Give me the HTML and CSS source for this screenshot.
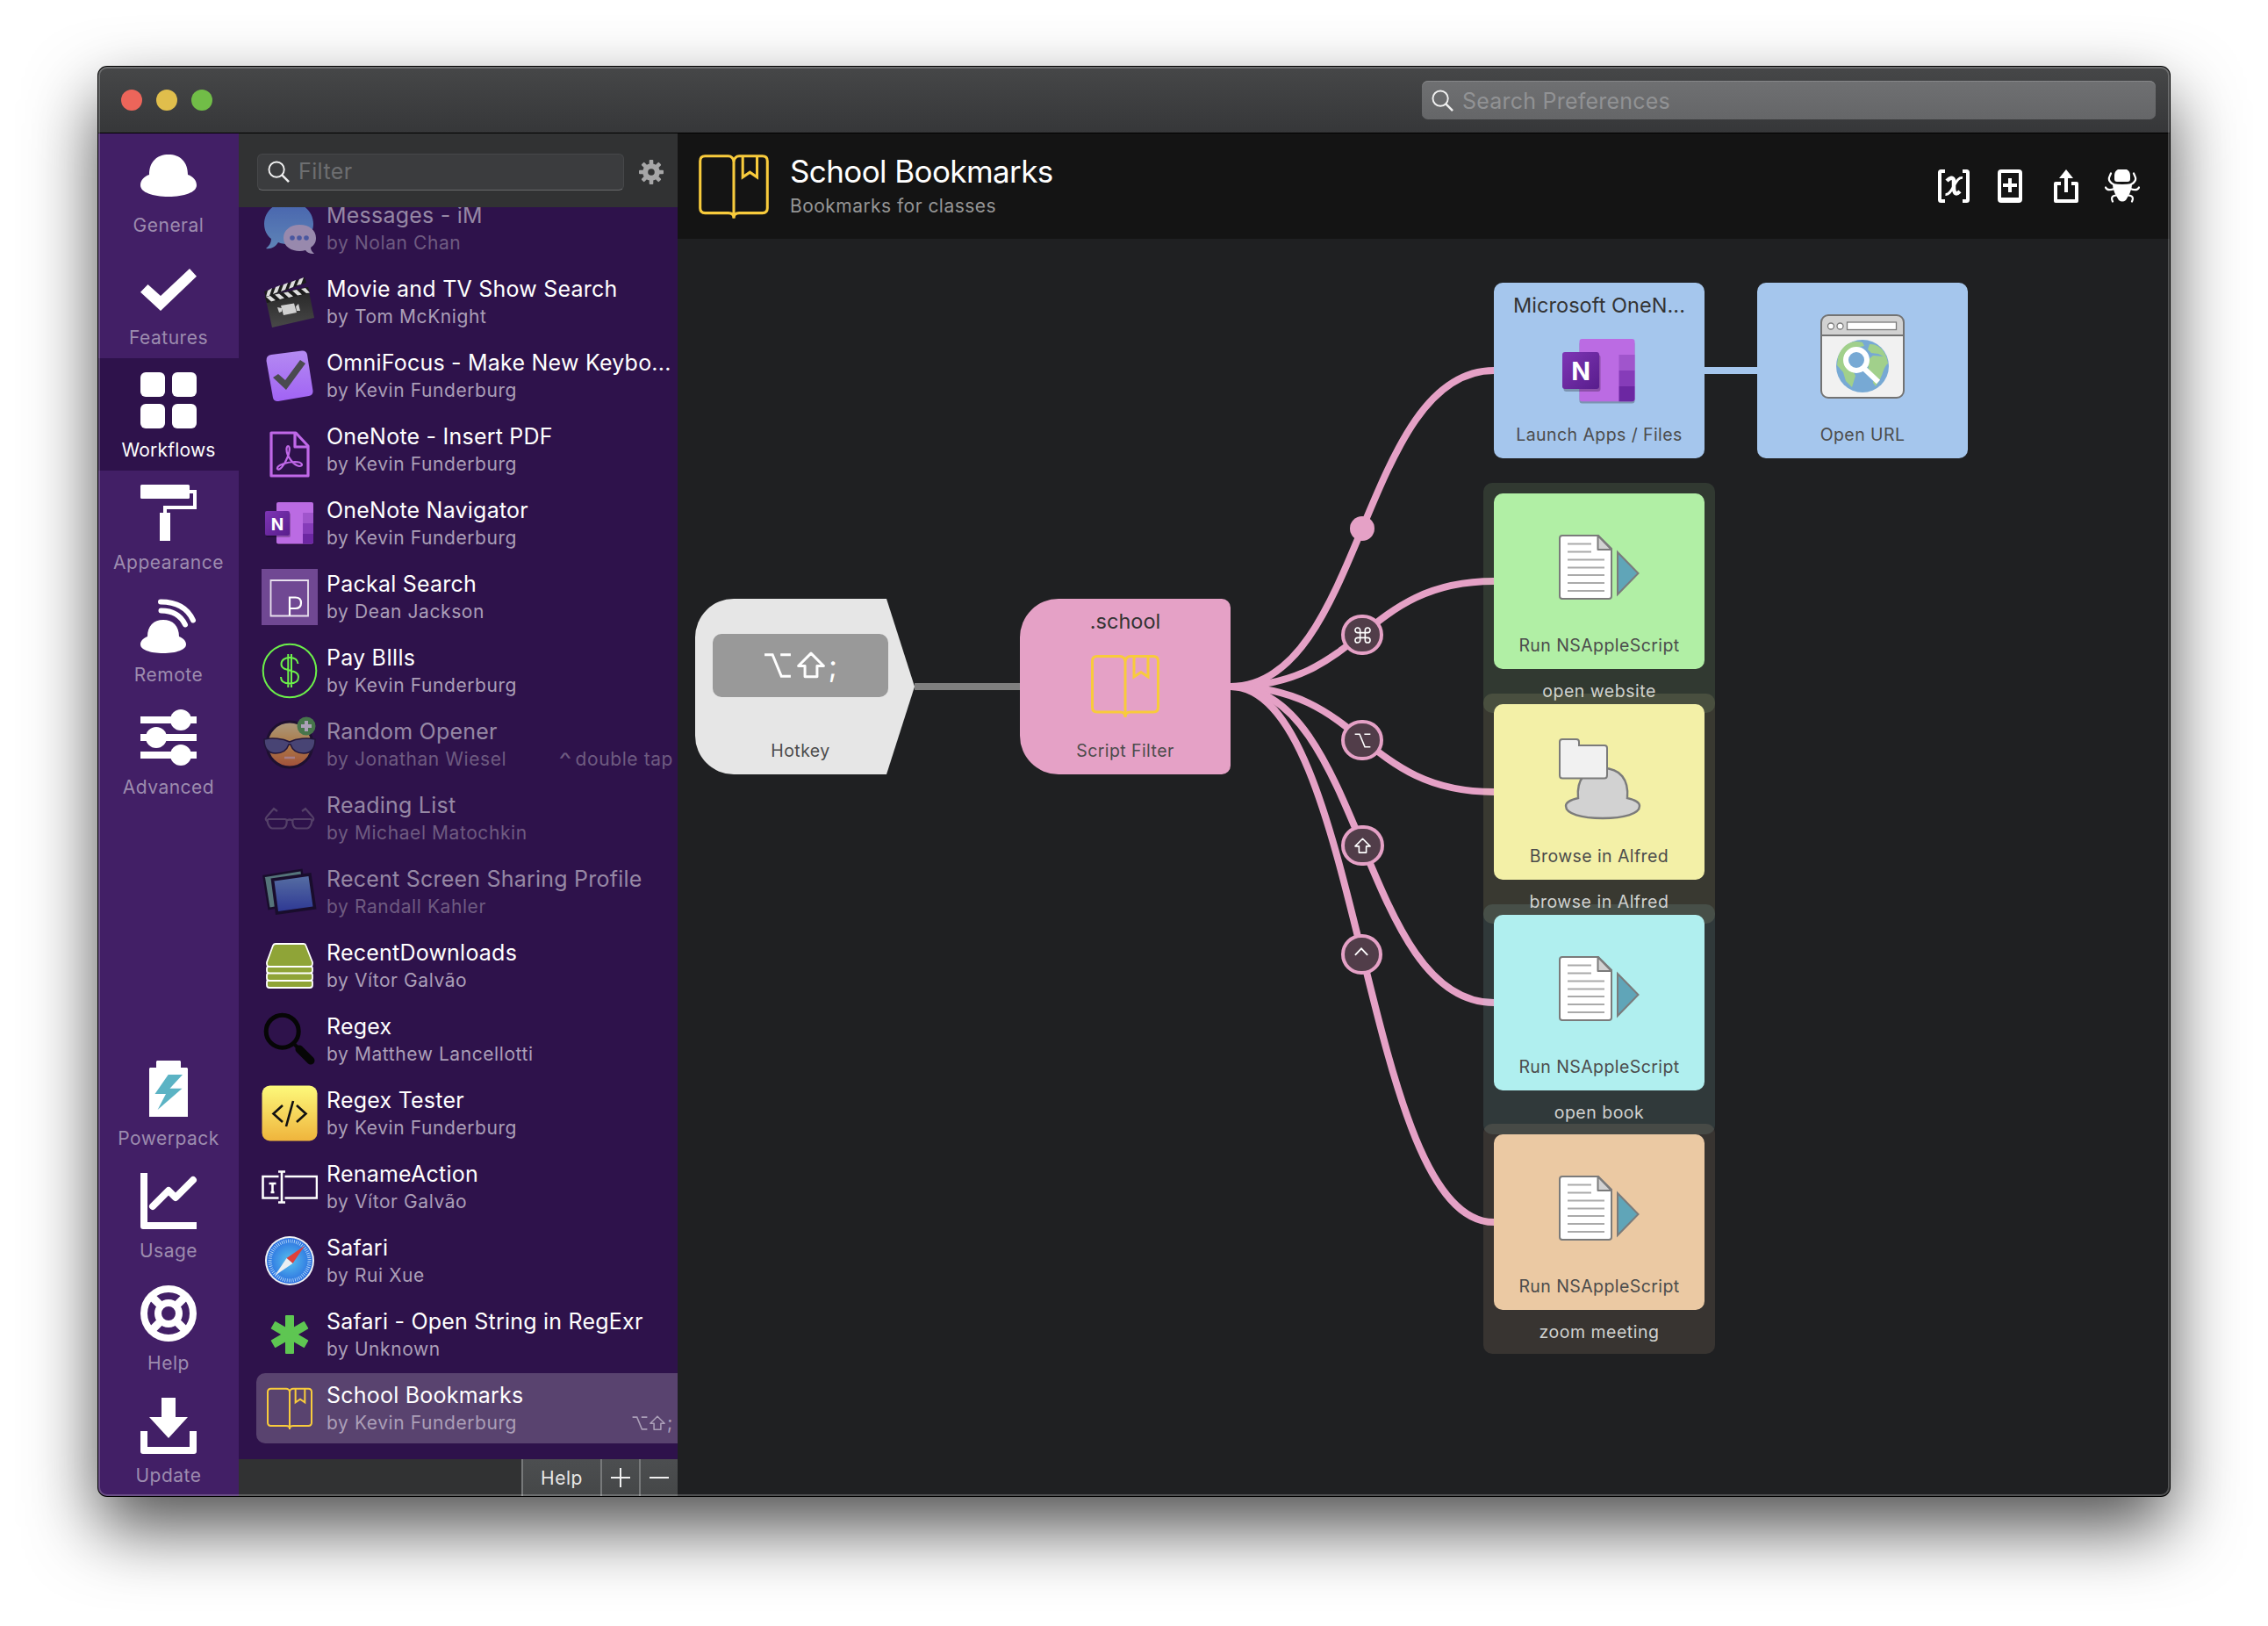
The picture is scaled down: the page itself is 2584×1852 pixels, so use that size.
FILE: index.html
```html
<!DOCTYPE html>
<html lang="en">
<head>
<meta charset="utf-8">
<title>Preferences</title>
<link rel="stylesheet" href="styles.css">
</head>
<body>
<svg class="defs" width="0" height="0" aria-hidden="true">
  <defs>
    <linearGradient id="gN" x1="0" y1="0" x2="1" y2="1"><stop offset="0" stop-color="#7e35b5"/><stop offset="1" stop-color="#581d8c"/></linearGradient>
    <linearGradient id="gOmni" x1="0" y1="0" x2="0" y2="1"><stop offset="0" stop-color="#b48af2"/><stop offset="1" stop-color="#a163f4"/></linearGradient>
    <linearGradient id="gYellow" x1="0" y1="0" x2="0" y2="1"><stop offset="0" stop-color="#fdf97b"/><stop offset="1" stop-color="#efb43c"/></linearGradient>
    <linearGradient id="gMsg" x1="0" y1="0" x2="0" y2="1"><stop offset="0" stop-color="#5a9cf0"/><stop offset="1" stop-color="#7fd0ff"/></linearGradient>
    <linearGradient id="gClap" x1="0" y1="0" x2="0" y2="1"><stop offset="0" stop-color="#242424"/><stop offset="1" stop-color="#484848"/></linearGradient>
    <linearGradient id="gFace" x1="0" y1="0" x2="0" y2="1"><stop offset="0" stop-color="#fff3a0"/><stop offset=".5" stop-color="#ffc046"/><stop offset="1" stop-color="#f07a30"/></linearGradient>
    <linearGradient id="gScreen" x1="0" y1="0" x2="0" y2="1"><stop offset="0" stop-color="#74aede"/><stop offset="1" stop-color="#2c4fc4"/></linearGradient>
    <radialGradient id="gSafari"><stop offset="0" stop-color="#57c0ee"/><stop offset="1" stop-color="#2b6fe0"/></radialGradient>
    <symbol id="book" viewBox="0 0 96 96">
      <g fill="none" stroke-width="3">
        <path d="M48 84V20.500C48 17 45 14.500 42 14.500H16Q10.500 14.500 10.500 20V72.500Q10.500 78 16 78H42C46 78 48 80 48 83"/>
        <path d="M48 20.500C48 17 51 14.500 54 14.500H80Q85.500 14.500 85.500 20V72.500Q85.500 78 80 78H54C50 78 48 80 48 83"/>
        <path d="M58 14.500V38L66 32.500L74 38V14.500"/>
      </g>
    </symbol>
    <symbol id="onenote" viewBox="0 0 64 64">
      <rect x="17" y="10" width="42" height="47" rx="2" fill="#000" opacity=".25"/>
      <rect x="17" y="8" width="42" height="47.500" rx="2" fill="#bb6be3"/>
      <path d="M47 20H59V32H47z" fill="#a055cc"/><path d="M47 32H59V44H47z" fill="#863cb9"/><path d="M47 44H59V53.500a2 2 0 0 1-2 2H47z" fill="#6c27a2"/>
      <rect x="5" y="20" width="28" height="28" rx="2" fill="#000" opacity=".25"/>
      <rect x="4" y="18" width="28" height="28" rx="2" fill="url(#gN)"/>
      <text x="18" y="39.500" text-anchor="middle" class="n-logo">N</text>
    </symbol>
    <symbol id="script" viewBox="0 0 96 96">
      <path d="M8 10H49L64 25V79a3 3 0 0 1-3 3H8a3 3 0 0 1-3-3V13a3 3 0 0 1 3-3z" fill="#fff" stroke="#7b7b7b" stroke-width="2"/>
      <path d="M48.500 10V26H64z" fill="#d2d2d2" stroke="#7b7b7b" stroke-width="2" stroke-linejoin="round"/>
      <path d="M14 19.500H41M14 28.500H41M14 37.500H56M14 46.500H56M14 55H56M14 64H56M14 73H56" stroke="#aaa" stroke-width="2"/>
      <path d="M71 29L94.500 53L71 77z" fill="#60a5b8" stroke="#7b7b7b" stroke-width="2"/>
    </symbol>
    <symbol id="lens" viewBox="0 0 26 26"><circle cx="10.500" cy="10.500" r="9" fill="none" stroke-width="2"/><path d="M17 17L25 25" stroke-width="2.600"/></symbol>
    <symbol id="opt" viewBox="0 0 30 30"><path d="M1 3.500H9.500L19 26.500H29M18 3.500H29" fill="none"/></symbol>
    <symbol id="shift" viewBox="0 0 30 30"><path d="M15 2L28.500 15.500H21.500V27H8.500V15.500H1.500z" fill="none" stroke-linejoin="round"/></symbol>
  </defs>
</svg>

<div class="window">
  <header class="titlebar">
    <div class="lights"><i class="red"></i><i class="yellow"></i><i class="green"></i></div>
    <div class="search"><svg class="lens"><use href="#lens"/></svg><span>Search Preferences</span></div>
  </header>
  <div class="content">
    <nav class="sidebar">
      <a class="tab"><svg viewBox="0 0 64 64"><path d="M10 31C10 16 19 8 32 8S54 16 54 31C60 33 64 37.500 64 43C64 51 50 56 32 56S0 51 0 43C0 37.500 4 33 10 31z"/></svg><span>General</span></a>
      <a class="tab"><svg viewBox="0 0 64 64"><path d="M0 36.700L8.500 28L23 41L56 10L64 18.700L23 58z"/></svg><span>Features</span></a>
      <a class="tab active"><svg viewBox="0 0 64 64"><rect width="28" height="28" rx="6"/><rect x="36" width="28" height="28" rx="6"/><rect y="36" width="28" height="28" rx="6"/><rect x="36" y="36" width="28" height="28" rx="6"/></svg><span>Workflows</span></a>
      <a class="tab"><svg viewBox="0 0 64 64"><rect width="56" height="16" rx="1.500"/><path d="M56 8H62V26H28V34" fill="none" stroke="#fff" stroke-width="4"/><rect x="22" y="32" width="12" height="32"/></svg><span>Appearance</span></a>
      <a class="tab"><svg viewBox="0 0 64 64"><path d="M8 45C8 33 15 26 26 26S44 33 44 45C49 47 52 50 52 54C52 60 41 64 26 64S0 60 0 54C0 50 3 47 8 45z"/><path d="M23.500 15.500C36 15.500 46 21 51 31.500M23 5.500C41 5.500 54 13 60 26.500" fill="none" stroke="#fff" stroke-width="6" stroke-linecap="round"/></svg><span>Remote</span></a>
      <a class="tab"><svg viewBox="0 0 64 64"><path d="M0 8H64V16H0zM0 28H64V36H0zM0 48H64V56H0z"/><circle cx="46" cy="12" r="12"/><circle cx="18" cy="32" r="12"/><circle cx="46" cy="52" r="12"/></svg><span>Advanced</span></a>
      <div class="spacer"></div>
      <a class="tab"><svg viewBox="0 0 64 64"><path d="M19 0H45L46 1V8H53L54 9V64H10V9L11 8H18V1z"/><path d="M31.700 16H48L33.500 31.700H47.500L19.600 56L29 38H16.500z" fill="#5bb3c4"/></svg><span>Powerpack</span></a>
      <a class="tab"><svg viewBox="0 0 64 64"><path d="M0 0H8V56H64V64H3Q0 64 0 61z"/><path d="M14 38L32 20L40 28L60 8" fill="none" stroke="#fff" stroke-width="8" stroke-linecap="round" stroke-linejoin="round"/></svg><span>Usage</span></a>
      <a class="tab"><svg viewBox="0 0 64 64"><g fill="none" stroke="#fff"><circle cx="32" cy="32" r="28" stroke-width="8"/><circle cx="32" cy="32" r="12" stroke-width="8"/><path d="M12 12L23 23M52 12L41 23M12 52L23 41M52 52L41 41" stroke-width="9"/></g></svg><span>Help</span></a>
      <a class="tab"><svg viewBox="0 0 64 64"><path d="M24 0H40V22H54L32 46L10 22H24z"/><path d="M0 38H8V56H56V38H64V61Q64 64 61 64H3Q0 64 0 61z"/></svg><span>Update</span></a>
    </nav>

    <section class="workflows">
      <div class="filterbar">
        <div class="filter"><svg class="lens"><use href="#lens"/></svg><span>Filter</span></div>
        <svg class="gear" viewBox="0 0 28 28"><g fill="#a6a6a7"><circle cx="14" cy="14" r="9.800"/><g id="teeth"><rect x="11.700" y="0" width="4.600" height="28" rx="1"/><rect x="0" y="11.700" width="28" height="4.600" rx="1"/></g><use href="#teeth" transform="rotate(45 14 14)"/></g><circle cx="14" cy="14" r="3.800" fill="#313233"/></svg>
      </div>
      <div class="list">
        <div class="row off"><svg class="ico" viewBox="0 0 64 64"><path d="M31 2C47 2 59 13 59 27S47 50 31 50C26 50 22 49.500 19 48C16 53 11 56 5 55C9 52 11 48 11 44C6 40 3 34 3 27C3 13 15 2 31 2z" fill="url(#gMsg)"/><path d="M43.500 28C54 28 62 34 62 43C62 48 60 51 56 54C56 57 58 59 60 61C56 61.500 52 60 50 57C40 60 25 56 25 43C25 34 33 28 43.500 28z" fill="#dfd9ee"/><g fill="#5d86d8"><circle cx="35" cy="43" r="2.800"/><circle cx="43" cy="43" r="2.800"/><circle cx="51" cy="43" r="2.800"/></g></svg><div class="meta"><b>Messages - iM</b><p>by Nolan Chan</p></div></div>
        <div class="row"><svg class="ico" viewBox="0 0 64 64"><path d="M4 25L53 15L60 50L12 61z" fill="url(#gClap)"/><path d="M3 20L49 4L51 10L5 27z" fill="#1c1c1c"/><path d="M7 19L12 16L9 25L5 26zM16 15L21 13L18 21L13 23zM25 12L30 10L27 18L22 20zM34 9L39 7L36 15L31 17zM43 6L48 4L45 12L40 13z" fill="#ddd"/><path d="M4 26L53 15L55 22L6 33z" fill="#1c1c1c"/><path d="M5 26L10 25L16 30L11 31.500zM15 23.500L20 22.500L26 27.500L21 29zM25 21.500L30 20.500L36 25.500L31 27zM35 19L40 18L46 23.500L41 24.500zM45 17L50 16L55 21.500L51 22z" fill="#ddd"/><path d="M22 36L37 33.500L40 44L25 47zM18 38L23 39V43L20 44zM39 37L42 34L44 42L40 42z" fill="#d0d0d0"/></svg><div class="meta"><b>Movie and TV Show Search</b><p>by Tom McKnight</p></div></div>
        <div class="row"><svg class="ico" viewBox="0 0 64 64"><path d="M11 8L46 3.500Q51 3 52 8L58.500 49Q59 54 54 55L19 61Q14 61.500 13 57L5.500 15Q5 9 11 8z" fill="url(#gOmni)"/><path d="M13 34L19 30L27 37L44 14L50 18L28 48z" fill="#4a4a50"/></svg><div class="meta"><b>OmniFocus - Make New Keybo...</b><p>by Kevin Funderburg</p></div></div>
        <div class="row"><svg class="ico" viewBox="0 0 64 64"><g fill="none" stroke="#c068e8" stroke-width="3.200" stroke-linejoin="round"><path d="M11 13H39L53 28V62H11z"/><path d="M38 13V29H53"/><path d="M30 28C33 28 32 36 29 42C26 50 20 57 18 54C17 50 29 46 38 46C47 46 48 51 43 51C37 50 28 40 28.500 31Q29 28 30 28z" stroke-width="2.200"/></g></svg><div class="meta"><b>OneNote - Insert PDF</b><p>by Kevin Funderburg</p></div></div>
        <div class="row"><svg class="ico"><use href="#onenote"/></svg><div class="meta"><b>OneNote Navigator</b><p>by Kevin Funderburg</p></div></div>
        <div class="row"><svg class="ico" viewBox="0 0 64 64"><rect width="64" height="64" fill="#704893"/><path d="M10.500 13H53V53.500H10.500z" fill="none" stroke="#e8e0ee" stroke-width="1.800"/><path d="M32 53V32.500H38.500Q45 32.500 45 38.700T38.500 45H32" fill="none" stroke="#fff" stroke-width="2.200"/></svg><div class="meta"><b>Packal Search</b><p>by Dean Jackson</p></div></div>
        <div class="row"><svg class="ico" viewBox="0 0 64 64"><g fill="none" stroke="#6cf04a" stroke-width="2"><circle cx="32" cy="32" r="30.300"/><path d="M41.500 24C41 19 37 17 32 17S22.500 19.500 22.500 24.500C22.500 34 42 29 42 39C42 44 38 46.500 32 46.500S22 44 22 39M30.300 13V51M34 13V51"/></g></svg><div class="meta"><b>Pay BIlls</b><p>by Kevin Funderburg</p></div></div>
        <div class="row off"><svg class="ico" viewBox="0 0 64 64"><circle cx="32" cy="32" r="26" fill="url(#gFace)" stroke="#15101f" stroke-width="3"/><path d="M3 26C12 24 24 25 32 29C40 25 52 24 61 26C61 36 57 42 48 42C40 42 35 38 33 32H31C29 38 24 42 16 42C7 42 3 36 3 26z" fill="#5a6690" stroke="#1a1730" stroke-width="1.500"/><path d="M26 47H38" stroke="#f7c6b0" stroke-width="2.500"/><circle cx="51" cy="11" r="10.500" fill="#58b84c"/><path d="M51 5V17M45 11H57" stroke="#fff" stroke-width="4"/></svg><div class="meta"><b>Random Opener</b><p>by Jonathan Wiesel<span><i class="caret">^</i>double tap</span></p></div></div>
        <div class="row off"><svg class="ico" viewBox="0 0 64 64"><g fill="none" stroke="#6e5f7c" stroke-width="2.200"><path d="M8 33H27C30 33 29 43 24 43.500H12C8 43 5 34 8 33zM37 33H56C59 34 56 43 52 43.500H40C35 43 34 33 37 33zM28 35Q32 32 36 35M6 35Q3 33 7 29L14 21L18 24M58 35Q61 33 57 29L50 21L46 24"/></g></svg><div class="meta"><b>Reading List</b><p>by Michael Matochkin</p></div></div>
        <div class="row off"><svg class="ico" viewBox="0 0 64 64"><path d="M2.500 14L45.500 7L51 43L8.500 51z" fill="#6fb59a" stroke="#0c0a18" stroke-width="2.500"/><path d="M12.500 18L55 12L60.500 50L17.500 56z" fill="url(#gScreen)" stroke="#0c0a18" stroke-width="3.500"/></svg><div class="meta"><b>Recent Screen Sharing Profile</b><p>by Randall Kahler</p></div></div>
        <div class="row"><svg class="ico" viewBox="0 0 64 64"><g fill="#8fa437" stroke="#fff" stroke-width="1.800" stroke-linejoin="round"><rect x="6" y="48" width="52" height="9" rx="3"/><rect x="6" y="40" width="52" height="9" rx="3"/><rect x="6" y="32.500" width="52" height="8" rx="3"/><path d="M16 7H48Q50 7 50.500 9L58 28Q58.500 33 55 33H9Q5.500 33 6 28L13 9Q14 7 16 7z"/></g></svg><div class="meta"><b>RecentDownloads</b><p>by Vítor Galvão</p></div></div>
        <div class="row"><svg class="ico" viewBox="0 0 64 64"><circle cx="23.700" cy="22.700" r="18.500" fill="none" stroke="#060606" stroke-width="5"/><path d="M36 36L43 43" stroke="#060606" stroke-width="4"/><path d="M43 43L56 56" stroke="#060606" stroke-width="9" stroke-linecap="round"/></svg><div class="meta"><b>Regex</b><p>by Matthew Lancellotti</p></div></div>
        <div class="row"><svg class="ico" viewBox="0 0 64 64"><rect x=".5" y=".5" width="63" height="63" rx="9" fill="url(#gYellow)"/><path d="M24 23L13.500 32.500L24 42M40 23L50.500 32.500L40 42M36 18L28 47" fill="none" stroke="#111" stroke-width="2.600"/></svg><div class="meta"><b>Regex Tester</b><p>by Kevin Funderburg</p></div></div>
        <div class="row"><svg class="ico" viewBox="0 0 64 64"><g fill="none" stroke="#fff" stroke-width="2.600"><path d="M19.500 20H1.500V44.500H19.500M26.500 20H63V44.500H26.500M23 15V49M19 14.500H27M19 49.500H27M8.500 28H16.500M12.500 28V38M10.500 38H14.500"/></g></svg><div class="meta"><b>RenameAction</b><p>by Vítor Galvão</p></div></div>
        <div class="row"><svg class="ico" viewBox="0 0 64 64"><circle cx="32" cy="32" r="28" fill="#eef0f3"/><circle cx="32" cy="32" r="26" fill="url(#gSafari)"/><circle cx="32" cy="32" r="22.500" fill="none" stroke="#bfe0fa" stroke-width="4" stroke-dasharray=".8 1.550"/><path d="M49 15L28.500 29L35.500 35z" fill="#e0403a"/><path d="M15 49L28.500 29L35.500 35z" fill="#eceff2"/></svg><div class="meta"><b>Safari</b><p>by Rui Xue</p></div></div>
        <div class="row"><svg class="ico" viewBox="0 0 64 64"><g fill="#5ec652"><rect x="27" y="10" width="10" height="44" rx="1"/><rect x="27" y="10" width="10" height="44" rx="1" transform="rotate(60 32 32)"/><rect x="27" y="10" width="10" height="44" rx="1" transform="rotate(120 32 32)"/></g></svg><div class="meta"><b>Safari - Open String in RegExr</b><p>by Unknown</p></div></div>
        <div class="row selected"><svg class="ico gold"><use href="#book"/></svg><div class="meta"><b>School Bookmarks</b><p>by Kevin Funderburg<span><svg class="key"><use href="#opt"/></svg><svg class="key"><use href="#shift"/></svg>;</span></p></div></div>
      </div>
      <footer class="actions"><span class="help">Help</span><span class="btn"><svg viewBox="0 0 22 22"><path d="M11 0V22M0 11H22"/></svg></span><span class="btn"><svg viewBox="0 0 22 22"><path d="M0 11H22"/></svg></span></footer>
    </section>

    <main class="editor">
      <div class="head">
        <svg class="bookmark gold"><use href="#book"/></svg>
        <div class="names"><h1>School Bookmarks</h1><p>Bookmarks for classes</p></div>
        <div class="tools">
          <svg width="36" height="38" viewBox="0 0 36 38"><path d="M8 2H3.500Q2 2 2 3.500V34.500Q2 36 3.500 36H8M28 2H32.500Q34 2 34 3.500V34.500Q34 36 32.500 36H28" fill="none" stroke="#fff" stroke-width="4"/><path d="M10 13Q16 7 18 12V22Q19 31 25 25" fill="none" stroke="#fff" stroke-width="4.500"/><path d="M28 9.500C23 9 21 14 18 19S13 29 8.500 28.500" fill="none" stroke="#fff" stroke-width="2.800"/></svg>
          <svg width="28" height="38" viewBox="0 0 28 38"><path d="M4 0H24Q28 0 28 4V34Q28 38 24 38H4Q0 38 0 34V4Q0 0 4 0zM4 4V32H24V4zM12 10H16V16H22V20H16V26H12V20H6V16H12z" fill="#fff" fill-rule="evenodd"/></svg>
          <svg width="28" height="38" viewBox="0 0 28 38"><path d="M8 16H2V36H26V16H20" fill="none" stroke="#fff" stroke-width="4" stroke-linejoin="round"/><path d="M14 0L22 10H16V26H12V10H6z" fill="#fff"/></svg>
          <svg width="40" height="38" viewBox="0 0 40 38"><path d="M15 0H25Q29 2 29 7V11Q29 14 26 14H14Q11 14 11 11V7Q11 2 15 0zM9 16Q20 18 31 16Q31 23 27 30L24 35Q20 38 16 35L13 30Q9 23 9 16z" fill="#fff"/><path d="M10 17Q3 13 5.500 8L7 4.500M30 17Q37 13 34.500 8L33 4.500M11 22Q3 25 1 20.500M29 22Q37 25 39 20.500M13 29.500Q6 30 9 36.500M27 29.500Q34 30 31 36.500" fill="none" stroke="#fff" stroke-width="2.200" stroke-linecap="round"/></svg>
        </div>
      </div>
      <div class="canvas">
        <svg class="wires" width="1700" height="1432" viewBox="0 0 1700 1432">
          <path d="M270 510H390" stroke="#7f7f7f"/>
          <path d="M1170 150H1230" stroke="#a5c6ed"/>
          <g stroke="#e5a1c6">
            <path d="M630 510C780 510 780 150 930 150"/>
            <path d="M630 510C780 510 780 390 930 390"/>
            <path d="M630 510C780 510 780 630 930 630"/>
            <path d="M630 510C780 510 780 870 930 870"/>
            <path d="M630 510C780 510 780 1120 930 1120"/>
          </g>
        </svg>
        <i class="dot"></i>
        <div class="badge cmd"><svg viewBox="0 0 20 20"><path d="M7 7V4A3 3 0 1 0 4 7H16A3 3 0 1 0 13 4V16A3 3 0 1 0 16 13H4A3 3 0 1 0 7 16z" fill="none" stroke="#fff" stroke-width="1.700"/></svg></div>
        <div class="badge alt"><svg><use href="#opt"/></svg></div>
        <div class="badge shift"><svg><use href="#shift"/></svg></div>
        <div class="badge ctrl"><svg viewBox="0 0 20 20"><path d="M2 10.500L9.500 2.500L17 10.500" fill="none" stroke="#fff" stroke-width="1.900"/></svg></div>

        <div class="group g1"></div><div class="group g2"></div><div class="group g3"></div><div class="group g4"></div>

        <div class="node hotkey"><svg class="shape" viewBox="0 0 250 200"><path d="M44 0H218L250 100L218 200H44A44 44 0 0 1 0 156V44A44 44 0 0 1 44 0z" fill="#e6e6e6"/></svg><div class="keys"><svg><use href="#opt"/></svg><svg><use href="#shift"/></svg><span>;</span></div><span class="kind">Hotkey</span></div>
        <div class="node filter-node"><span class="title">.school</span><svg class="pic gold"><use href="#book"/></svg><span class="kind">Script Filter</span></div>
        <div class="node launch"><span class="title">Microsoft OneN...</span><svg class="pic"><use href="#onenote"/></svg><span class="kind">Launch Apps / Files</span></div>
        <div class="node openurl"><svg class="pic" viewBox="0 0 96 96"><rect x="1" y="1" width="94" height="94" rx="8" fill="#f1f1f1"/><path d="M1 24V9Q1 1 9 1H87Q95 1 95 9V24z" fill="#d2d2d2"/><rect x="1" y="1" width="94" height="94" rx="8" fill="none" stroke="#737373" stroke-width="2"/><path d="M1 24H95" stroke="#737373" stroke-width="2"/><g fill="#fff" stroke="#7b7b7b" stroke-width="1.300"><circle cx="12" cy="13.500" r="3.500"/><circle cx="22.500" cy="13.500" r="3.500"/><rect x="30.500" y="9" width="56" height="8.500"/></g><circle cx="48" cy="59" r="30" fill="#77a9d4"/><path d="M20 49C24 35 36 28 48 32L50 36L41 38L36 48L30 56L36 62L40 70L36 83L29 76L26 66L19 58zM56 34C68 33 76 45 77 56C72 60 72 66 68 74L63 82L60 78L61 70L55 66L54 52L60 47L72 48L66 45L58 44L54 40z" fill="#a1d08b"/><circle cx="41" cy="52" r="12" fill="#77a9d4" stroke="#fff" stroke-width="6"/><path d="M49 61L66 77" stroke="#fff" stroke-width="6"/></svg><span class="kind">Open URL</span></div>
        <div class="node n1"><svg class="pic script"><use href="#script"/></svg><span class="kind">Run NSAppleScript</span></div>
        <div class="node n2"><svg class="pic" viewBox="2 0 96 96"><path d="M26 71C24 50 34 37 54 37C74 37 84 50 82 71C91 73 96 76 96 80C96 89 78 94 54 94S12 89 12 80C12 76 17 73 26 71z" fill="#d2d2d2" stroke="#7b7b7b" stroke-width="2.400"/><path d="M8 4H24Q27 4 27 7V11H56Q59 11 59 14V45Q59 48.500 56 48.500H8Q5 48.500 5 45V7Q5 4 8 4z" fill="#f1f1f1" stroke="#7b7b7b" stroke-width="2"/></svg><span class="kind">Browse in Alfred</span></div>
        <div class="node n3"><svg class="pic script"><use href="#script"/></svg><span class="kind">Run NSAppleScript</span></div>
        <div class="node n4"><svg class="pic script"><use href="#script"/></svg><span class="kind">Run NSAppleScript</span></div>
        <span class="note c1">open website</span><span class="note c2">browse in Alfred</span><span class="note c3">open book</span><span class="note c4">zoom meeting</span>
      </div>
    </main>
  </div>
</div>
</body>
</html>
```
FILE: styles.css
```css
* { box-sizing: border-box; }
body { margin: 0; padding: 76px 112px 148px; background: #fff; font-family: Inter, "Liberation Sans", sans-serif; width: 2584px; height: 1852px; overflow: hidden; }
p, h1 { margin: 0; font-weight: 400; }
svg { display: block; flex: none; }
.defs { position: absolute; }

.window { position: relative; width: 2360px; height: 1628px; border-radius: 10px; overflow: visible; display: flex; flex-direction: column; background: #1f2022; box-shadow: 0 0 0 1px #000, 0 36px 80px rgba(0,0,0,.69); }
.window::after { content: ""; position: absolute; inset: 0; border: 2px solid rgba(255,255,255,.22); border-radius: 10px; pointer-events: none; }

.titlebar { height: 76px; flex: none; display: flex; align-items: center; justify-content: space-between; padding: 0 16px 0 26px; border-bottom: 1px solid #000; border-radius: 10px 10px 0 0; background: linear-gradient(#464748, #363739); }
.lights { display: flex; gap: 16px; }
.lights i { width: 24px; height: 24px; border-radius: 50%; }
.red { background: #ec655a; } .yellow { background: #e0be4c; } .green { background: #71bd47; }
.search { width: 836px; height: 44px; border-radius: 7px; background: linear-gradient(#6f7072, #656668); box-shadow: inset 0 1px #858688; display: flex; align-items: center; gap: 10px; padding: 2px 0 0 11px; font-size: 25px; letter-spacing: .22px; color: #919294; }
.lens { width: 25px; height: 25px; stroke: #f0f0f0; }

.content { flex: 1; display: flex; min-height: 0; }
.sidebar { width: 160px; display: flex; flex-direction: column; background: #421f66; border-bottom-left-radius: 10px; }
.tab { height: 128px; padding-top: 16px; display: flex; flex-direction: column; align-items: center; gap: 11px; color: #9d8caf; font-size: 21px; line-height: 28px; letter-spacing: .5px; }
.tab svg { width: 64px; height: 64px; fill: #fff; overflow: visible; }
.tab.active { background: #2e124b; color: #fff; letter-spacing: .2px; }
.spacer { flex: 1; }

.workflows { width: 500px; display: flex; flex-direction: column; background: #2e124b; }
.filterbar { height: 84px; flex: none; background: #313233; display: flex; align-items: center; padding: 4px 16px 0 21px; justify-content: space-between; position: relative; z-index: 1; }
.filter { width: 418px; height: 42px; border: 1px solid #47484a; border-bottom-color: #68696b; border-radius: 6px; background: #3b3c3e; display: flex; align-items: center; gap: 10px; padding: 0 0 2px 11px; font-size: 25px; letter-spacing: .4px; color: #6d6e70; }
.gear { width: 28px; height: 28px; }
.list { flex: 1; min-height: 0; overflow: hidden; display: flex; flex-direction: column; gap: 4px; padding-left: 20px; }
.list .row:first-child { margin-top: -16px; }
.row { height: 80px; flex: none; display: flex; gap: 10px; padding: 8px 5px 0 6px; }
.row.selected { background: #59436f; border-radius: 10px 0 0 10px; }
.ico { width: 64px; height: 64px; }
.off .ico { opacity: .6; }
.meta { flex: 1; padding-top: 2px; white-space: nowrap; color: #fff; }
.meta b { display: block; font-weight: 400; font-size: 25px; line-height: 30px; letter-spacing: .22px; }
.meta p { margin-top: 2px; display: flex; justify-content: space-between; font-size: 21px; line-height: 30px; letter-spacing: .58px; color: #ab9fb8; }
.meta p span { display: flex; align-items: center; gap: 2px; }
.caret { font-style: normal; display: inline-block; transform: scaleX(1.500); margin-right: 4px; }
.key { width: 18px; height: 18px; stroke: #ab9fb8; stroke-width: 2.600; }
.off .meta b { color: #9688a5; }
.off .meta p { color: #6e5b81; }
.n-logo { font: 700 19px Inter, sans-serif; fill: #fff; }
.gold { stroke: #f8cb3c; }
.actions { height: 42px; flex: none; background: #313233; display: flex; justify-content: flex-end; color: #e6e6e6; font-size: 21px; letter-spacing: .5px; }
.actions span { display: flex; align-items: center; justify-content: center; background: linear-gradient(#4c4e50, #454748); border-left: 2px solid #77797a; }
.help { width: 90px; }
.btn { width: 44px; }
.btn svg { width: 22px; height: 22px; stroke: #f0f0f0; stroke-width: 2; }

.editor { flex: 1; display: flex; flex-direction: column; }
.head { height: 120px; flex: none; background: #141414; display: flex; padding: 0 34px 0 15px; }
.bookmark { width: 98px; height: 98px; margin-top: 11px; }
.names { padding: 20px 0 0 15px; flex: 1; }
.names h1 { font-size: 35px; line-height: 46px; letter-spacing: -.6px; color: #fff; }
.names p { margin-top: 2px; font-size: 21px; line-height: 30px; letter-spacing: .46px; color: #969696; }
.tools { display: flex; padding-top: 41px; gap: 32px; }
.tools svg:nth-child(3) { margin-left: 4px; }
.tools svg:nth-child(4) { margin-left: -2px; }

.canvas { flex: 1; position: relative; }
.wires { position: absolute; left: 0; top: 0; fill: none; stroke-width: 8; }
.dot { position: absolute; left: 766px; top: 316px; width: 28px; height: 28px; border-radius: 50%; background: #e5a1c6; }
.badge { position: absolute; left: 756px; width: 48px; height: 46px; border: 4px solid #e5a1c6; border-radius: 24px; background: #513d49; display: flex; align-items: center; justify-content: center; }
.badge svg { width: 19px; height: 19px; stroke: #fff; stroke-width: 2.600; }
.cmd { top: 428px; } .alt { top: 548px; } .shift { top: 668px; width: 49px; } .ctrl { top: 792px; width: 47px; }

.group { position: absolute; left: 918px; width: 264px; height: 262px; border-radius: 10px; }
.g1 { top: 278px; background: rgba(177,239,165,.12); }
.g2 { top: 518px; background: rgba(243,240,167,.12); z-index: 2; }
.g3 { top: 758px; background: rgba(176,239,239,.12); z-index: 2; }
.g4 { top: 1008px; background: rgba(235,201,163,.12); z-index: 2; }

.node { position: absolute; z-index: 3; width: 240px; height: 200px; border-radius: 10px; display: flex; flex-direction: column; align-items: center; padding: 36px 0 15px; white-space: nowrap; }
.node .title { height: 52px; margin-top: -36px; padding-top: 10px; font-size: 23.500px; line-height: 31px; letter-spacing: .05px; color: #333; }
.pic { width: 96px; height: 96px; }
.pic.script { margin: 2px 4px -2px 0; }
.kind { margin-top: auto; font-size: 19.500px; line-height: 24px; letter-spacing: .42px; color: #4c4c4c; }
.hotkey { left: 20px; top: 410px; }
.shape { position: absolute; left: 0; top: 0; width: 250px; height: 200px; }
.keys { position: relative; margin-top: 4px; width: 200px; height: 72px; border-radius: 10px; background: #999; display: flex; align-items: center; justify-content: center; gap: 6px; color: #fff; font-size: 34px; }
.keys svg { width: 32px; height: 32px; stroke: #fff; stroke-width: 2.800; }
.keys span { margin-left: -2px; }
.hotkey .kind { position: relative; }
.filter-node { left: 390px; top: 410px; background: #e5a1c6; border-radius: 44px 10px 10px 44px; }
.filter-node .pic { margin-top: -1px; }
.launch { left: 930px; top: 50px; background: #a5c6ed; }
.openurl { left: 1230px; top: 50px; background: #a5c6ed; }
.n1 { left: 930px; top: 290px; background: #b1efa5; }
.n2 { left: 930px; top: 530px; background: #f3f0a7; }
.n3 { left: 930px; top: 770px; background: #b0efef; }
.n4 { left: 930px; top: 1020px; background: #ebc9a3; }
.note { position: absolute; z-index: 1; left: 918px; width: 264px; text-align: center; font-size: 19.500px; line-height: 24px; letter-spacing: .5px; color: #d0d2d0; }
.c1 { top: 503px; } .c2 { top: 743px; z-index: 2; } .c3 { top: 983px; z-index: 2; } .c4 { top: 1233px; z-index: 2; }
```
